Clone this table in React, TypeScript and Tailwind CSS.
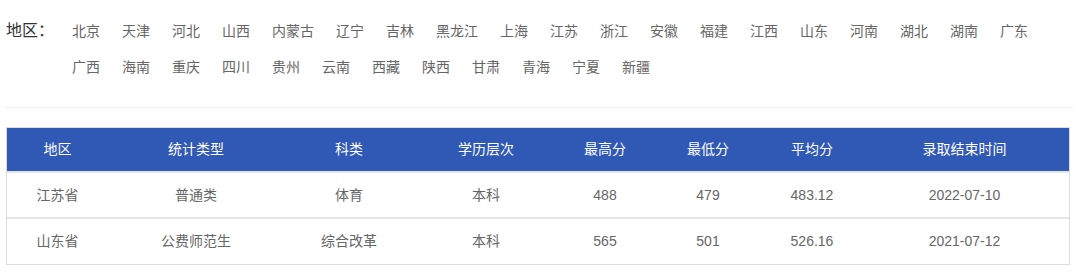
import React from 'react';

const provinces = [
  '北京', '天津', '河北', '山西', '内蒙古', '辽宁', '吉林', '黑龙江', '上海', '江苏', '浙江', '安徽', '福建',
  '江西', '山东', '河南', '湖北', '湖南', '广东', '广西', '海南', '重庆', '四川', '贵州', '云南', '西藏',
  '陕西', '甘肃', '青海', '宁夏', '新疆',
];

const columns = [
  { title: '地区', width: 101 },
  { title: '统计类型', width: 176 },
  { title: '科类', width: 130 },
  { title: '学历层次', width: 144 },
  { title: '最高分', width: 94 },
  { title: '最低分', width: 112 },
  { title: '平均分', width: 96 },
  { title: '录取结束时间', width: 209 },
];

const rows = [
  ['江苏省', '普通类', '体育', '本科', '488', '479', '483.12', '2022-07-10'],
  ['山东省', '公费师范生', '综合改革', '本科', '565', '501', '526.16', '2021-07-12'],
];

const App: React.FC = () => {
  return (
    <div className="w-[1080px] h-[274px] bg-white overflow-hidden font-['Liberation_Sans','Noto_Sans_CJK_SC',sans-serif]">
      <div className="pt-[13px] pb-[22px] pl-[6px] pr-[10px] flex">
        <div className="w-[66px] shrink-0 text-[16px] leading-[36px] text-[#333]">地区：</div>
        <ul className="flex flex-wrap flex-1">
          {provinces.map(p => (
            <li key={p} className="mr-[22px] text-[14px] leading-[36px] text-[#666] cursor-pointer hover:text-[#3058b5]">
              {p}
            </li>
          ))}
        </ul>
      </div>
      <div className="mx-[6px] border-t border-dotted border-[#e6e6e6]" />
      <div className="pt-[19px] px-[6px]">
        <div className="w-[1064px] border border-[#dcdcdc]">
          <table className="w-full table-fixed border-collapse text-[14px] text-center">
            <colgroup>
              {columns.map(c => <col key={c.title} style={{ width: c.width }} />)}
            </colgroup>
            <thead>
              <tr className="bg-[#3058b5] text-white h-[44px]">
                {columns.map(c => (
                  <th key={c.title} className="font-normal">{c.title}</th>
                ))}
              </tr>
            </thead>
            <tbody>
              {rows.map((r, ri) => (
                <tr key={r[0]} className={`h-[46px] border-t-2 border-[#e5e5e5] ${ri === rows.length - 1 ? 'h-[45px]' : ''}`}>
                  {r.map((v, i) => (
                    <td key={i} className="text-[#666]">{v}</td>
                  ))}
                </tr>
              ))}
            </tbody>
          </table>
        </div>
      </div>
    </div>
  );
};

export default App;
